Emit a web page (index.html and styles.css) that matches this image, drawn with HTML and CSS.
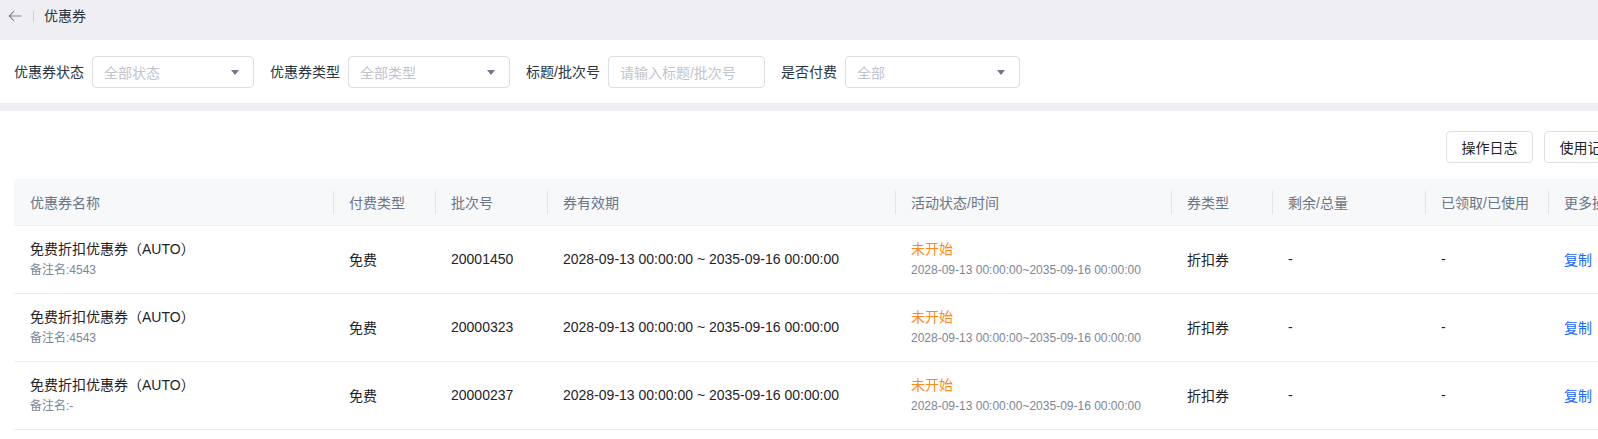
FILE: index.html
```html
<!DOCTYPE html>
<html lang="zh-CN">
<head>
<meta charset="utf-8">
<title>优惠券</title>
<link rel="stylesheet" href="styles.css">
</head>
<body>
<div class="page">
  <div class="topbar">
    <svg class="back" width="14" height="12" viewBox="0 0 14 12" aria-hidden="true">
      <path d="M13.5 6H1.2M6 1.2L1.2 6L6 10.8" fill="none" stroke="#7d8799" stroke-width="1.1"/>
    </svg>
    <span class="divider"></span>
    <span class="title">优惠券</span>
  </div>

  <div class="filters">
    <div class="field">
      <span class="label">优惠券状态</span>
      <div class="select w162"><span class="ph">全部状态</span><span class="caret"></span></div>
    </div>
    <div class="field">
      <span class="label">优惠券类型</span>
      <div class="select w162"><span class="ph">全部类型</span><span class="caret"></span></div>
    </div>
    <div class="field">
      <span class="label">标题/批次号</span>
      <div class="select w157"><span class="ph">请输入标题/批次号</span></div>
    </div>
    <div class="field">
      <span class="label">是否付费</span>
      <div class="select w175"><span class="ph">全部</span><span class="caret"></span></div>
    </div>
  </div>

  <div class="content">
    <div class="toolbar">
      <button class="btn">操作日志</button>
      <button class="btn">使用记录</button>
    </div>
    <table class="grid">
      <colgroup>
        <col class="c1"><col class="c2"><col class="c3"><col class="c4"><col class="c5"><col class="c6"><col class="c7"><col class="c8"><col class="c9">
      </colgroup>
      <thead>
        <tr>
          <th>优惠券名称</th>
          <th class="sep">付费类型</th>
          <th class="sep">批次号</th>
          <th class="sep">券有效期</th>
          <th class="sep">活动状态/时间</th>
          <th class="sep">券类型</th>
          <th class="sep">剩余/总量</th>
          <th class="sep">已领取/已使用</th>
          <th class="sep">更多操作</th>
        </tr>
      </thead>
      <tbody>
        <tr>
          <td><div class="main">免费折扣优惠券（AUTO）</div><div class="sub">备注名:4543</div></td>
          <td>免费</td>
          <td>20001450</td>
          <td>2028-09-13 00:00:00 ~ 2035-09-16 00:00:00</td>
          <td><div class="status">未开始</div><div class="sub">2028-09-13 00:00:00~2035-09-16 00:00:00</div></td>
          <td>折扣券</td>
          <td>-</td>
          <td>-</td>
          <td><a class="link">复制</a></td>
        </tr>
        <tr>
          <td><div class="main">免费折扣优惠券（AUTO）</div><div class="sub">备注名:4543</div></td>
          <td>免费</td>
          <td>20000323</td>
          <td>2028-09-13 00:00:00 ~ 2035-09-16 00:00:00</td>
          <td><div class="status">未开始</div><div class="sub">2028-09-13 00:00:00~2035-09-16 00:00:00</div></td>
          <td>折扣券</td>
          <td>-</td>
          <td>-</td>
          <td><a class="link">复制</a></td>
        </tr>
        <tr>
          <td><div class="main">免费折扣优惠券（AUTO）</div><div class="sub">备注名:-</div></td>
          <td>免费</td>
          <td>20000237</td>
          <td>2028-09-13 00:00:00 ~ 2035-09-16 00:00:00</td>
          <td><div class="status">未开始</div><div class="sub">2028-09-13 00:00:00~2035-09-16 00:00:00</div></td>
          <td>折扣券</td>
          <td>-</td>
          <td>-</td>
          <td><a class="link">复制</a></td>
        </tr>
      </tbody>
    </table>
  </div>
</div>
</body>
</html>
```

FILE: styles.css
```css
* { box-sizing: border-box; }

html, body {
  margin: 0;
  padding: 0;
  overflow: hidden;
  background: #ffffff;
}

body {
  font-family: "Liberation Sans", "Noto Sans CJK SC", Arial, sans-serif;
  font-size: 14px;
  color: #1f2329;
}

.page {
  width: 1645px;
  background: #eeeef3;
}

.topbar {
  height: 40px;
  padding: 5px 0 0 8px;
  display: flex;
  align-items: flex-start;
}

.topbar .back {
  margin-top: 5px;
  display: block;
}

.topbar .divider {
  width: 1px;
  height: 11px;
  background: #c9cdd4;
  margin: 6px 0 0 11px;
}

.topbar .title {
  margin-left: 10px;
  line-height: 22px;
  font-size: 14px;
  color: #2b3441;
}

.filters {
  background: #ffffff;
  height: 63px;
  padding: 16px 14px 0;
  display: flex;
  gap: 16px;
  margin-bottom: 8px;
}

.field {
  display: flex;
  align-items: center;
  gap: 8px;
  height: 32px;
}

.label {
  color: #2b3441;
  line-height: 22px;
  white-space: nowrap;
}

.select {
  height: 32px;
  border: 1px solid #dcdfe6;
  border-radius: 4px;
  display: flex;
  align-items: center;
  justify-content: space-between;
  padding: 0 14px 0 11px;
}

.w162 { width: 162px; }
.w157 { width: 157px; }
.w175 { width: 175px; }

.ph {
  color: #bfc4cd;
  white-space: nowrap;
}

.caret {
  width: 0;
  height: 0;
  border-left: 4px solid transparent;
  border-right: 4px solid transparent;
  border-top: 5px solid #6f7887;
}

.content {
  background: #ffffff;
  padding: 20px 14px 20px;
}

.toolbar {
  display: flex;
  justify-content: flex-end;
  gap: 11px;
}

.btn {
  width: 87px;
  height: 32px;
  padding: 0;
  background: #ffffff;
  border: 1px solid #dcdfe6;
  border-radius: 4px;
  font: inherit;
  font-size: 14px;
  color: #1f2329;
  white-space: nowrap;
}

.grid {
  margin-top: 16px;
  width: 100%;
  border-collapse: collapse;
  table-layout: fixed;
}

.c1 { width: 319px; }
.c2 { width: 102px; }
.c3 { width: 112px; }
.c4 { width: 348px; }
.c5 { width: 276px; }
.c6 { width: 101px; }
.c7 { width: 153px; }
.c8 { width: 123px; }

.grid th {
  height: 46px;
  background: #f7f8fa;
  font-weight: normal;
  text-align: left;
  color: #6b7585;
  padding: 0 0 0 16px;
  white-space: nowrap;
  overflow: hidden;
  position: relative;
  border-bottom: 1px solid #ebedf0;
}

.grid th.sep::before {
  content: "";
  position: absolute;
  left: 0;
  top: 12px;
  width: 1px;
  height: 23px;
  background: #e1e4e8;
}

.grid td {
  height: 68px;
  padding: 0 0 0 16px;
  border-bottom: 1px solid #ebedf0;
  vertical-align: middle;
  white-space: nowrap;
  overflow: hidden;
  color: #1f2329;
}

.main {
  line-height: 22px;
  color: #1f2329;
}

.status {
  line-height: 22px;
  color: #ff8a1a;
}

.sub {
  font-size: 12px;
  line-height: 20px;
  color: #7d8695;
}

.link {
  color: #1a66ff;
  text-decoration: none;
}
```
